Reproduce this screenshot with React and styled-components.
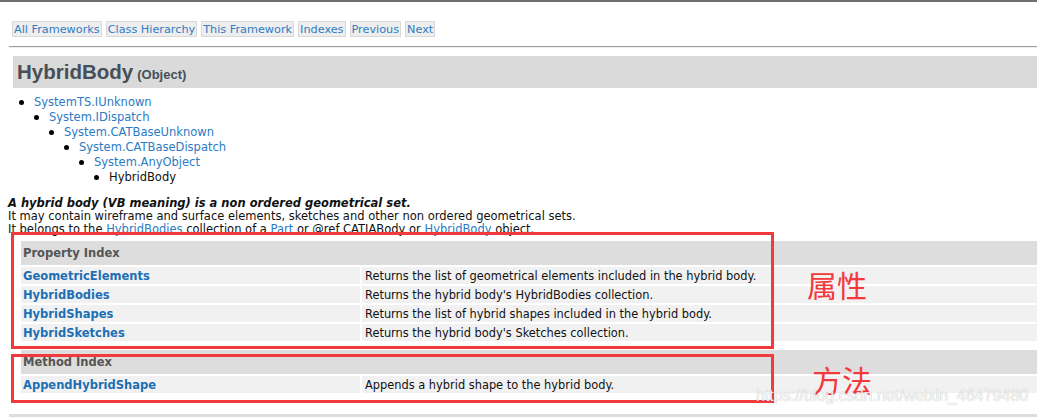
import React from "react";
import styled, { createGlobalStyle, css } from "styled-components";

const GlobalStyle = createGlobalStyle`
  html, body {
    margin: 0;
    padding: 0;
    background: #fff;
  }
  body {
    font-family: "DejaVu Sans", Verdana, sans-serif;
    font-size: 11.5px;
    color: #111;
    overflow: hidden;
  }
`;

const Page = styled.div`
  position: relative;
  width: 1037px;
  height: 417px;
  overflow: hidden;
`;

const TopRule = styled.div`
  height: 2px;
  background: #6e6e6e;
`;

const Nav = styled.nav`
  display: flex;
  gap: 4px;
  margin: 19px 0 0 12px;
  font-size: 11.25px;
`;

const NavLink = styled.a`
  display: block;
  height: 14px;
  line-height: 15px;
  padding: 0 1px;
  background: #eeeeee;
  border: 1px solid #d9d9d9;
  color: #2f7cc2;
  text-decoration: none;
  white-space: nowrap;
`;

const Rule = styled.div`
  margin: 9px 0 0 9px;
  border-top: 1px solid #9c9c9c;
  border-bottom: 1px solid #efefef;
`;

const TitleBar = styled.div`
  display: flex;
  align-items: baseline;
  gap: 4px;
  margin: 8px 0 0 13px;
  height: 32px;
  padding-left: 4px;
  background: #dadada;
  font-family: "Liberation Sans", Arial, sans-serif;
  font-weight: bold;
  color: #464f58;
`;

const Title = styled.h1`
  margin: 0;
  font-size: 20.5px;
  line-height: 31px;
`;

const TitleKind = styled.span`
  font-size: 13px;
`;

const Tree = styled.ul`
  list-style: none;
  margin: ${p => (p.$root ? "7px 0 0 19px" : "0")};
  padding: 0 0 0 ${p => (p.$root ? "0" : "15px")};
`;

const TreeItem = styled.li`
  line-height: 15px;
  & > span {
    display: flex;
    align-items: center;
  }
  & > span::before {
    content: "";
    width: 5px;
    height: 5px;
    border-radius: 50%;
    background: #000;
    margin-right: 10px;
    flex: none;
  }
`;

const link = css`
  color: #2b7bc4;
  text-decoration: none;
`;

const TreeLink = styled.a`
  ${link}
`;

const Description = styled.div`
  margin: 12px 0 0 8px;
  line-height: 13px;
  p {
    margin: 0;
  }
`;

const Lead = styled.p`
  font-weight: bold;
  font-style: italic;
`;

const InlineLink = styled.a`
  color: #2b7bc4;
  text-decoration: underline;
`;

const IndexTable = styled.div`
  display: grid;
  grid-template-columns: 339px 1fr;
  gap: 2px;
  margin: ${p => p.$top}px 0 0 21px;
`;

const IndexHead = styled.div`
  grid-column: 1 / -1;
  height: 24px;
  line-height: 25px;
  padding-left: 2px;
  background: #dddddd;
  color: #555;
  font-weight: bold;
`;

const Cell = styled.div`
  height: 17px;
  line-height: 18px;
  padding: 0 ${p => (p.$name ? "2px" : "3px")};
  background: #f1f1f1;
  white-space: nowrap;
  font-size: ${p => (p.$name ? "11.5px" : "11.4px")};
`;

const MemberLink = styled.a`
  color: #1c6fb5;
  font-weight: bold;
  text-decoration: none;
`;

const NextBand = styled.div`
  margin: 21px 0 0 9px;
  height: 8px;
  background: #dddddd;
`;

const Mark = styled.div`
  position: absolute;
  left: 11px;
  top: ${p => p.$top}px;
  width: 757px;
  height: ${p => p.$h}px;
  border: 3px solid #f2393c;
`;

const Note = styled.div`
  position: absolute;
  left: ${p => p.$left}px;
  top: ${p => p.$top}px;
  font-family: "Noto Sans CJK SC", sans-serif;
  font-size: 30px;
  line-height: 30px;
  color: #f2393c;
`;

const Watermark = styled.div`
  position: absolute;
  left: 756px;
  top: 387px;
  font-family: "Liberation Sans", Arial, sans-serif;
  font-size: 16px;
  line-height: 18px;
  color: rgba(255, 255, 255, 0.85);
  text-shadow: 0 0 1px rgba(120, 120, 120, 0.6);
  white-space: nowrap;
`;

const navItems = ["All Frameworks", "Class Hierarchy", "This Framework", "Indexes", "Previous", "Next"];

const ancestry = ["SystemTS.IUnknown", "System.IDispatch", "System.CATBaseUnknown", "System.CATBaseDispatch", "System.AnyObject"];

const properties = [
  ["GeometricElements", "Returns the list of geometrical elements included in the hybrid body."],
  ["HybridBodies", "Returns the hybrid body's HybridBodies collection."],
  ["HybridShapes", "Returns the list of hybrid shapes included in the hybrid body."],
  ["HybridSketches", "Returns the hybrid body's Sketches collection."],
];

const methods = [["AppendHybridShape", "Appends a hybrid shape to the hybrid body."]];

const renderTree = (items, root) => {
  const [first, ...rest] = items;
  return (
    <Tree $root={root}>
      <TreeItem>
        <span>{first ? <TreeLink href="#">{first}</TreeLink> : "HybridBody"}</span>
        {first && renderTree(rest, false)}
      </TreeItem>
    </Tree>
  );
};

const Index = ({ title, rows, top }) => (
  <IndexTable $top={top}>
    <IndexHead>{title}</IndexHead>
    {rows.map(([name, text]) => (
      <React.Fragment key={name}>
        <Cell $name><MemberLink href="#">{name}</MemberLink></Cell>
        <Cell>{text}</Cell>
      </React.Fragment>
    ))}
  </IndexTable>
);

export default function App() {
  return (
    <Page>
      <GlobalStyle />
      <TopRule />
      <Nav>
        {navItems.map(item => (
          <NavLink key={item} href="#">{item}</NavLink>
        ))}
      </Nav>
      <Rule />
      <TitleBar>
        <Title>HybridBody</Title>
        <TitleKind>(Object)</TitleKind>
      </TitleBar>
      {renderTree(ancestry, true)}
      <Description>
        <Lead>A hybrid body (VB meaning) is a non ordered geometrical set.</Lead>
        <p>It may contain wireframe and surface elements, sketches and other non ordered geometrical sets.</p>
        <p>
          It belongs to the <InlineLink href="#">HybridBodies</InlineLink> collection of a{" "}
          <InlineLink href="#">Part</InlineLink> or @ref CATIABody or{" "}
          <InlineLink href="#">HybridBody</InlineLink> object.
        </p>
      </Description>
      <Index title="Property Index" rows={properties} top={5} />
      <Index title="Method Index" rows={methods} top={9} />
      <NextBand />

      <Mark $top={232} $h={111} />
      <Mark $top={354} $h={43} />
      <Note $left={807} $top={269}>属性</Note>
      <Note $left={812} $top={364}>方法</Note>
      <Watermark>https://blog.csdn.net/weixin_46479480</Watermark>
    </Page>
  );
}
